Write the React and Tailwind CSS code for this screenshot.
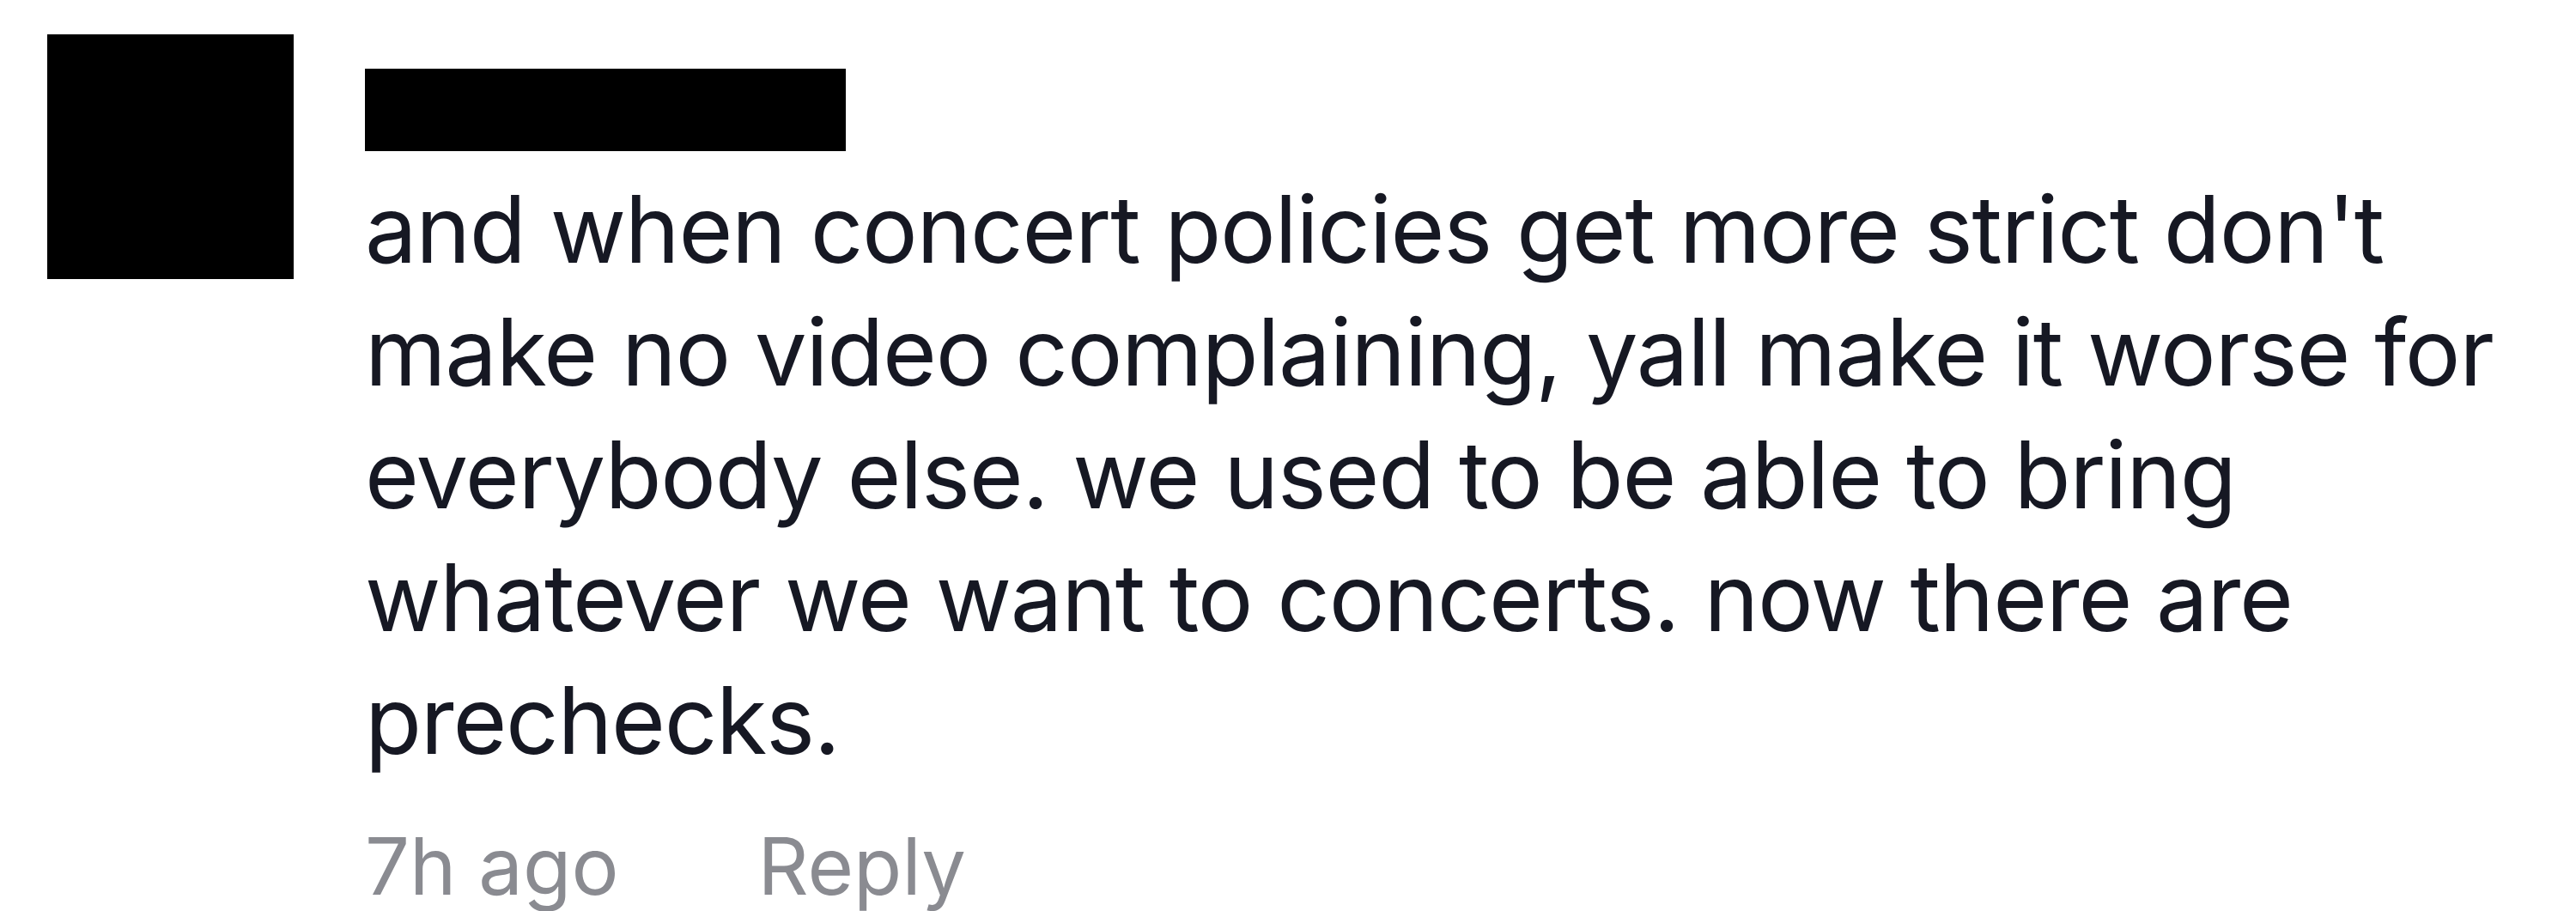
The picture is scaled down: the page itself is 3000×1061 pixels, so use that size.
export default function App() {
  const lines = [
    "and when concert policies get more strict don't",
    "make no video complaining, yall make it worse for",
    "everybody else. we used to be able to bring",
    "whatever we want to concerts. now there are",
    "prechecks.",
  ];
  return (
    <div
      className="w-[3000px] h-[1061px] overflow-hidden bg-white flex items-start pl-[55px] pt-[40px]"
      style={{ fontFamily: "Inter, 'Liberation Sans', sans-serif" }}
    >
      <div className="w-[287px] h-[285px] bg-black shrink-0" />
      <div className="ml-[83px] flex flex-col">
        <div className="mt-[40px] w-[560px] h-[96px] bg-black" />
        <div className="mt-[19px] text-[108px] leading-[143px] tracking-[-1.3px] text-[#161823]">
          {lines.map((l, i) => (
            <div key={i} className="whitespace-nowrap">
              {l}
            </div>
          ))}
        </div>
        <div className="mt-[53px] flex items-baseline text-[92px] leading-[92px] text-[#8a8b91]">
          <span className="whitespace-nowrap">7h ago</span>
          <span className="ml-[162px] whitespace-nowrap">Reply</span>
        </div>
      </div>
    </div>
  );
}
